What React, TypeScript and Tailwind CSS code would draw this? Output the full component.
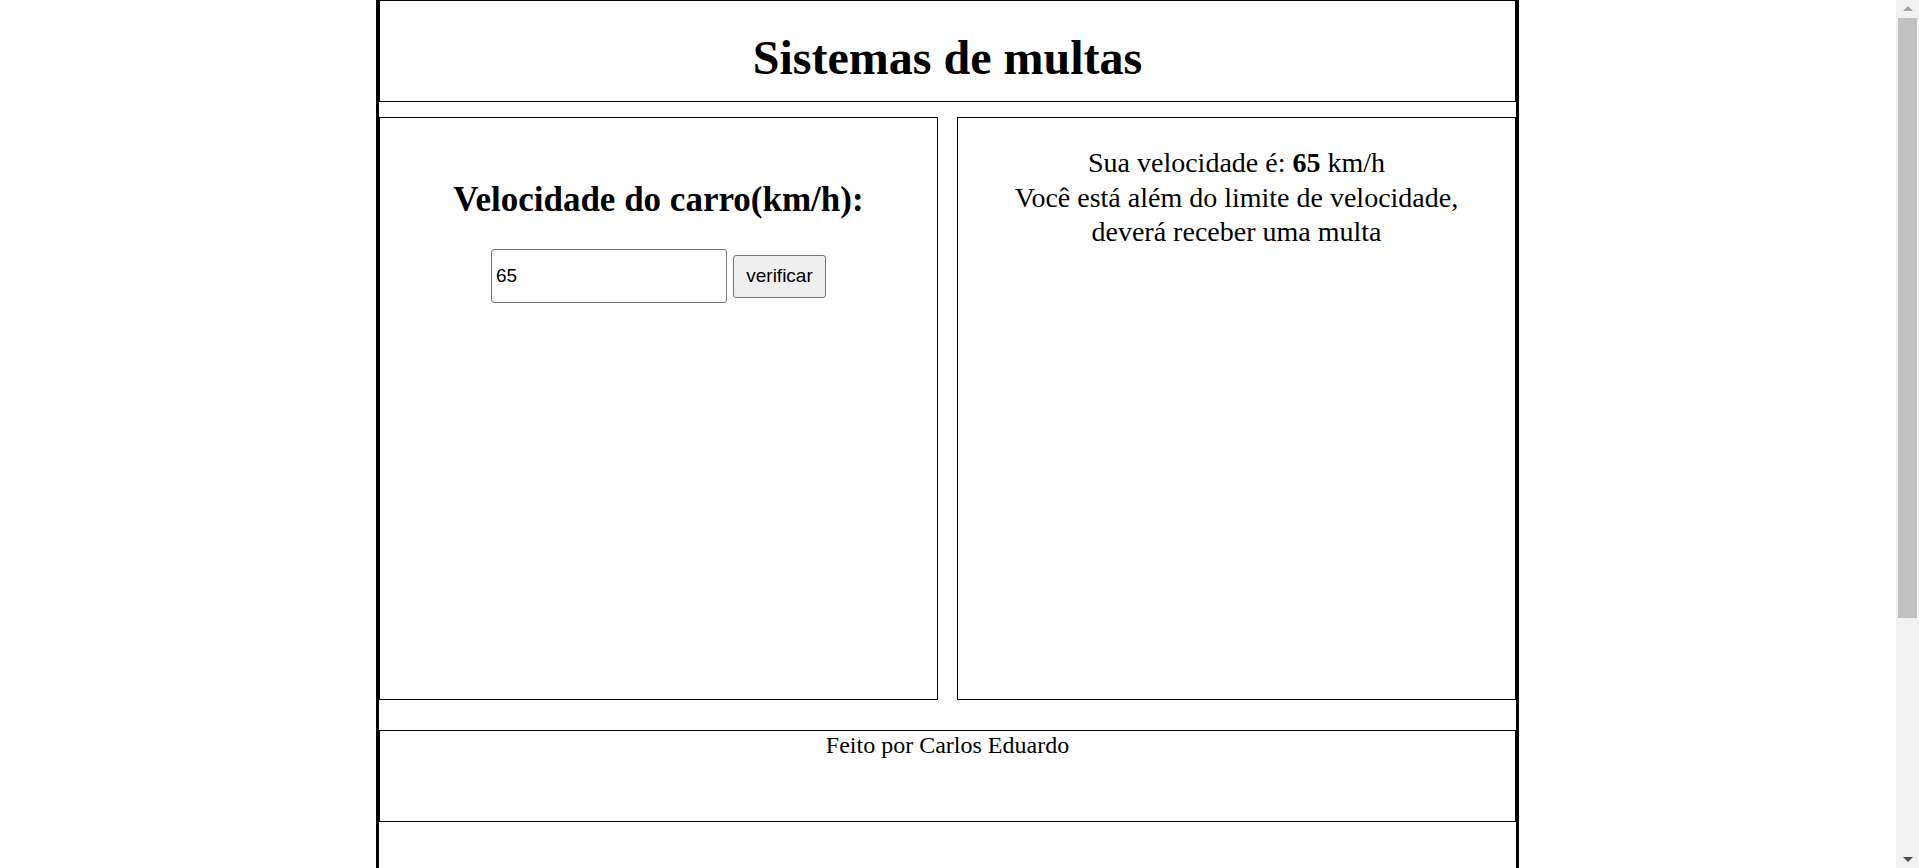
export default function App() {
  return (
    <div className="bg-white text-black font-['Liberation_Serif','Times_New_Roman',serif]">
      <div className="ml-[376px] w-[1143px] h-[1206px] border-x-[3px] border-black">
        <header className="h-[102px] border border-black pt-[29px] text-center">
          <h1 className="text-[48px] font-bold leading-[1.15]">Sistemas de multas</h1>
        </header>

        <div className="mt-[15px] flex justify-between">
          <section className="w-[559px] h-[583px] border border-black flex flex-col items-center pt-[62px]">
            <h2 className="text-[35px] font-bold leading-[40px]">Velocidade do carro(km/h):</h2>
            <div className="mt-[29px] flex items-center gap-[6px] font-['Liberation_Sans',Arial,sans-serif]">
              <input
                type="text"
                defaultValue="65"
                className="w-[236px] h-[54px] rounded-[3px] border border-[#767676] bg-white px-[4px] text-[19px] text-black outline-none"
              />
              <button
                type="button"
                className="w-[93px] h-[43px] rounded-[3px] border border-[#767676] bg-[#efefef] text-[19px] text-black"
              >
                verificar
              </button>
            </div>
          </section>

          <section className="w-[559px] h-[583px] border border-black pt-[28px] text-center text-[28px] leading-[34.5px]">
            <p>
              Sua velocidade é: <strong className="font-bold">65</strong> km/h
            </p>
            <p>Você está além do limite de velocidade,</p>
            <p>deverá receber uma multa</p>
          </section>
        </div>

        <footer className="mt-[30px] h-[92px] border border-black pt-[1px] text-center text-[24px] leading-[1.15]">
          Feito por Carlos Eduardo
        </footer>
      </div>

      {/* browser scrollbar */}
      <div className="fixed right-0 top-0 flex h-screen w-[23px] flex-col items-center bg-[#f1f1f1]">
        <div className="flex h-[17px] w-full items-center justify-center">
          <div className="h-0 w-0 border-x-[5px] border-b-[5px] border-x-transparent border-b-[#a3a3a3]" />
        </div>
        <div className="mt-[1px] h-[600px] w-[19px] bg-[#c1c1c1]" />
        <div className="flex-1" />
        <div className="flex h-[17px] w-full items-center justify-center">
          <div className="h-0 w-0 border-x-[5px] border-t-[5px] border-x-transparent border-t-[#505050]" />
        </div>
      </div>
    </div>
  );
}
